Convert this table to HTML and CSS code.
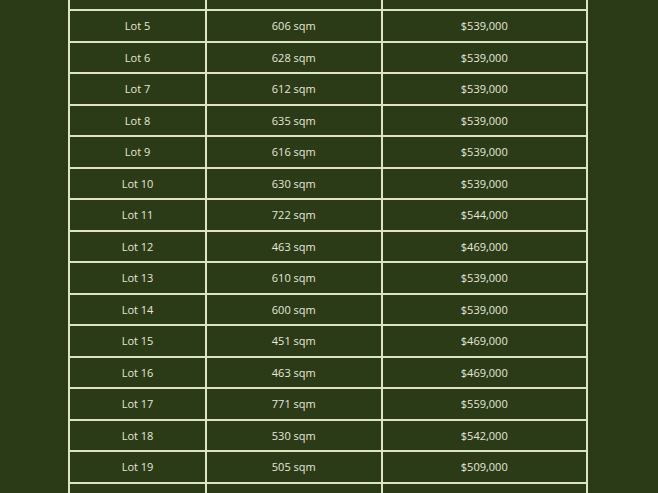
FILE: index.html
```html
<!DOCTYPE html>
<html>
<head>
<meta charset="utf-8">
<link rel="stylesheet" href="styles.css">
</head>
<body>
<div class="wrap">
<table class="lots">
<colgroup><col class="c1"><col class="c2"><col class="c3"></colgroup>
<tbody>
<tr><td></td><td></td><td></td></tr>
<tr><td>Lot 5</td><td>606 sqm</td><td>$539,000</td></tr>
<tr><td>Lot 6</td><td>628 sqm</td><td>$539,000</td></tr>
<tr><td>Lot 7</td><td>612 sqm</td><td>$539,000</td></tr>
<tr><td>Lot 8</td><td>635 sqm</td><td>$539,000</td></tr>
<tr><td>Lot 9</td><td>616 sqm</td><td>$539,000</td></tr>
<tr><td>Lot 10</td><td>630 sqm</td><td>$539,000</td></tr>
<tr><td>Lot 11</td><td>722 sqm</td><td>$544,000</td></tr>
<tr><td>Lot 12</td><td>463 sqm</td><td>$469,000</td></tr>
<tr><td>Lot 13</td><td>610 sqm</td><td>$539,000</td></tr>
<tr><td>Lot 14</td><td>600 sqm</td><td>$539,000</td></tr>
<tr><td>Lot 15</td><td>451 sqm</td><td>$469,000</td></tr>
<tr><td>Lot 16</td><td>463 sqm</td><td>$469,000</td></tr>
<tr><td>Lot 17</td><td>771 sqm</td><td>$559,000</td></tr>
<tr><td>Lot 18</td><td>530 sqm</td><td>$542,000</td></tr>
<tr><td>Lot 19</td><td>505 sqm</td><td>$509,000</td></tr>
<tr><td></td><td></td><td></td></tr>
</tbody>
</table>
</div>
</body>
</html>
```
FILE: styles.css
```css
html, body {
  margin: 0;
  padding: 0;
  background: #2b3a17;
  overflow: hidden;
  height: 493px;
}
.wrap {
  padding-left: 68px;
  margin-top: -22.5px;
}
.lots {
  border-collapse: collapse;
  table-layout: fixed;
  width: 518px;
  font-family: "Open Sans", "Liberation Sans", sans-serif;
  font-size: 11px;
  color: #e6e8da;
}
.c1 { width: 137px; }
.c2 { width: 175.5px; }
.c3 { width: 205.5px; }
.lots td {
  border: 2px solid #dde3c3;
  height: 31.5px;
  padding: 0;
  text-align: center;
  vertical-align: middle;
  box-sizing: border-box;
}
```
